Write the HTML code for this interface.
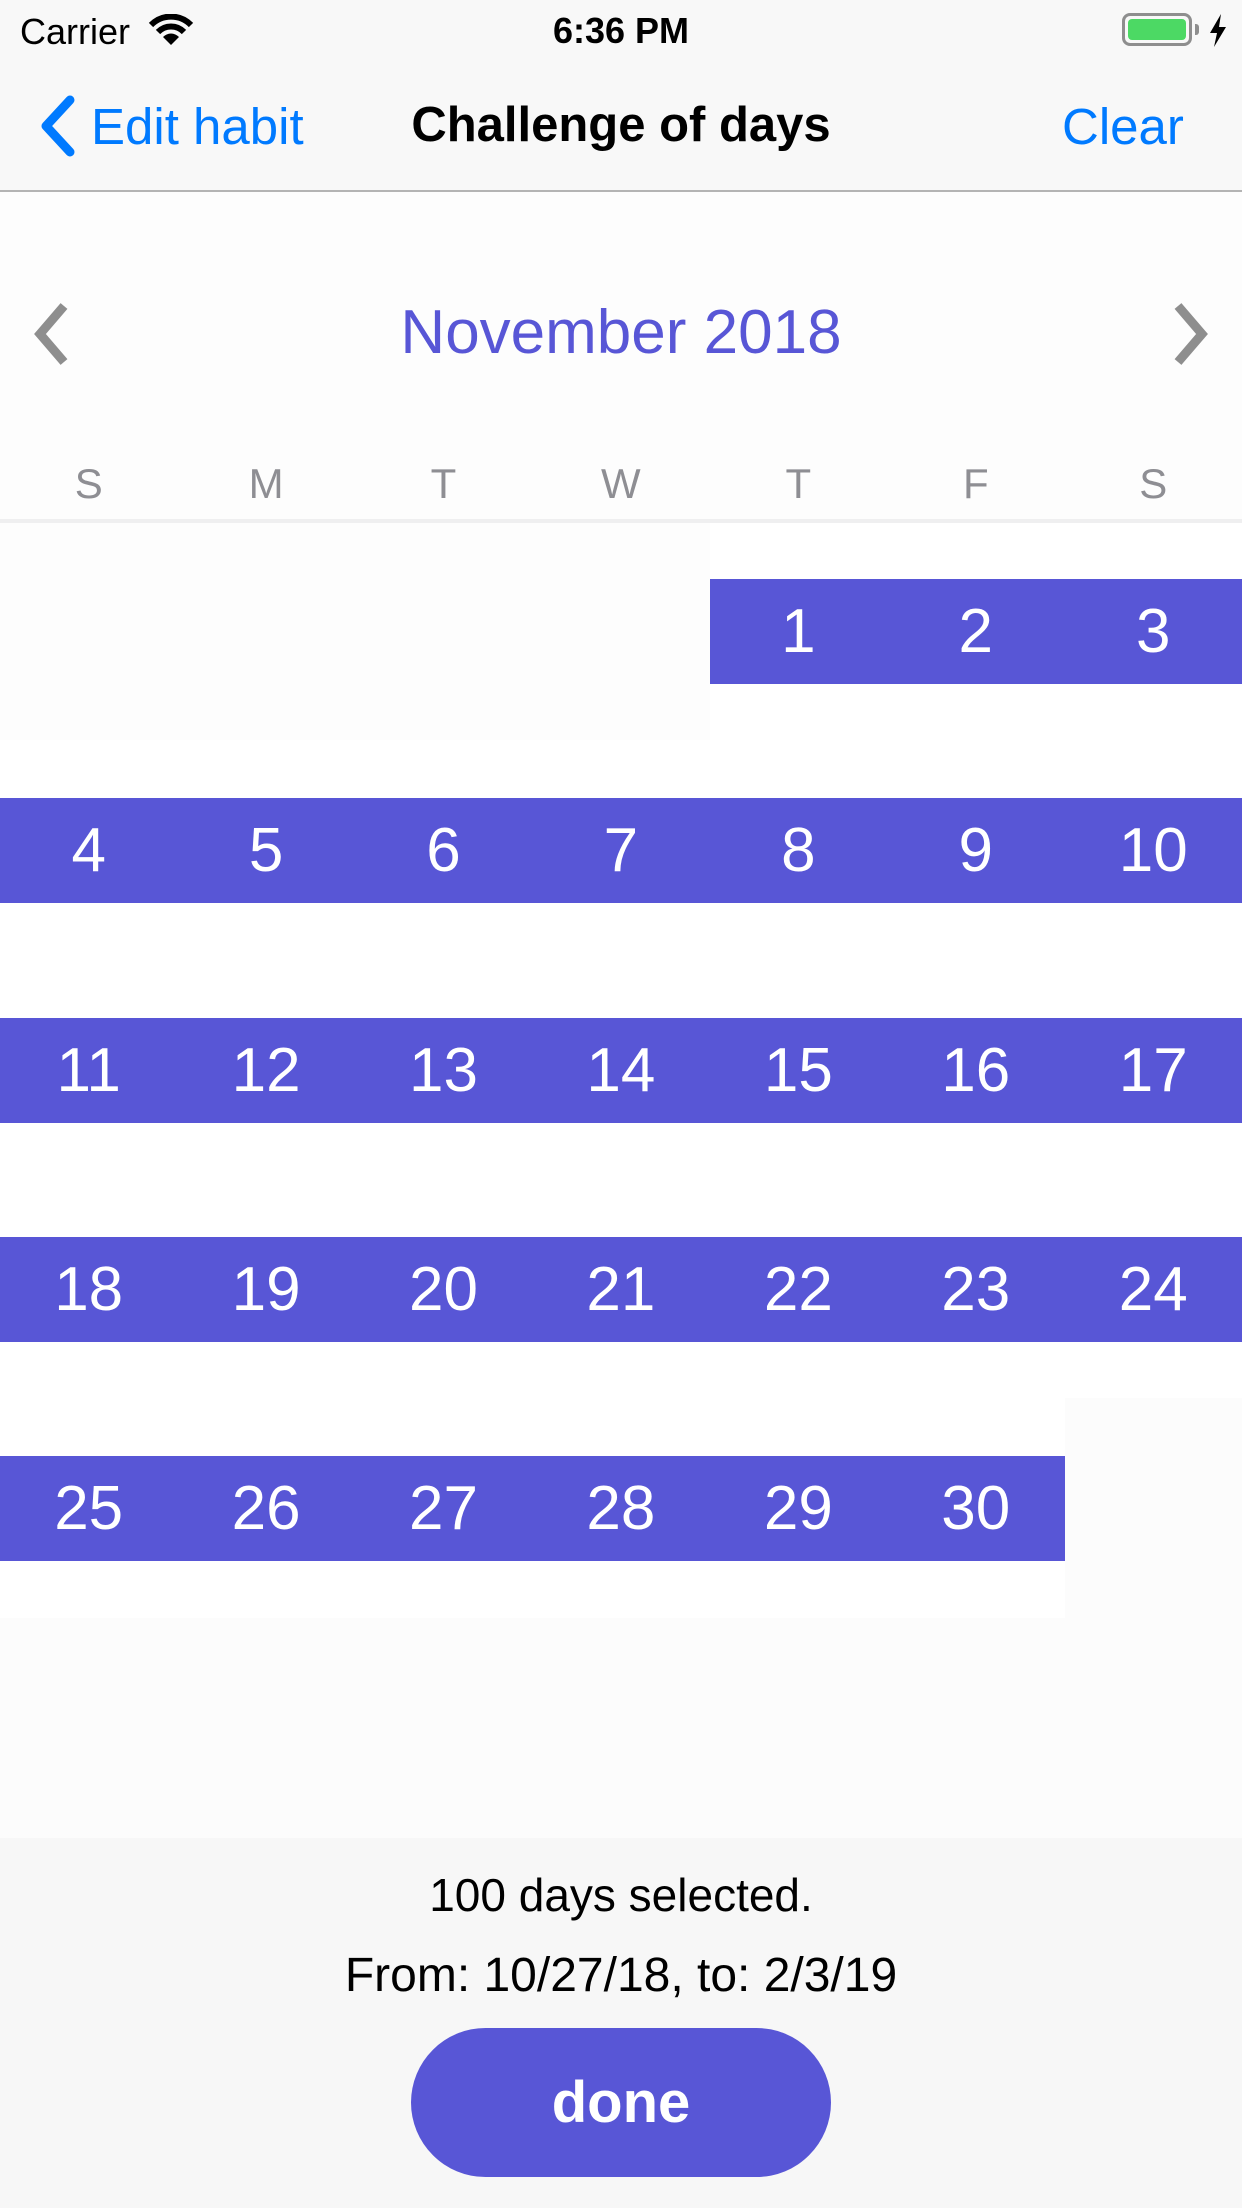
<!DOCTYPE html>
<html><head><meta charset="utf-8"><style>
*{margin:0;padding:0;box-sizing:border-box}
body{width:1242px;height:2208px;position:relative;overflow:hidden;font-family:"Liberation Sans",sans-serif;background:#fdfdfd}
.abs{position:absolute}
.nav{left:0;top:0;width:1242px;height:192px;background:#f8f8f8;border-bottom:2px solid #b4b4b4}
.t{position:absolute;white-space:nowrap;line-height:1}
.bar{position:absolute;height:105px;background:#5856d6}
.d{position:absolute;width:177.4px;text-align:center;color:#fff;font-size:62px;line-height:105px}
.wd{position:absolute;width:177.4px;text-align:center;color:#8e8e93;font-size:42px;top:460px}
</style></head><body>
<div class="abs nav"></div>
<div class="t" style="left:20px;top:14px;font-size:36px;color:#000">Carrier</div>
<svg class="abs" style="left:148px;top:14px" width="46" height="32" viewBox="0 0 46 32">
<path d="M3 11 A28 28 0 0 1 43 11" stroke="#000" stroke-width="6" fill="none"/>
<path d="M10 18 A18 18 0 0 1 36 18" stroke="#000" stroke-width="6" fill="none"/>
<path d="M23 31 L15 23 A11 11 0 0 1 31 23 Z" fill="#000"/></svg>
<div class="t" style="left:0;width:1242px;text-align:center;top:13px;font-size:36px;font-weight:bold;color:#000">6:36 PM</div>
<div class="abs" style="left:1122px;top:13px;width:70px;height:33px;border:3px solid #8e8e8e;border-radius:8px;padding:3px"><div style="width:100%;height:100%;background:#4cd964;border-radius:4px"></div></div>
<div class="abs" style="left:1195px;top:24px;width:4px;height:11px;background:#8e8e8e;border-radius:0 3px 3px 0"></div>
<svg class="abs" style="left:1208px;top:14px" width="20" height="33" viewBox="0 0 20 33"><path d="M13 0 L2 19 L9 19 L6 33 L18 13 L11 13 Z" fill="#000"/></svg>
<svg class="abs" style="left:36px;top:92px" width="44" height="68" viewBox="0 0 44 68"><path d="M34 8 L10 34 L34 60" stroke="#007aff" stroke-width="9" fill="none" stroke-linecap="round" stroke-linejoin="round"/></svg>
<div class="t" style="left:91px;top:101px;font-size:51px;color:#007aff">Edit habit</div>
<div class="t" style="left:0;width:1242px;text-align:center;top:101px;font-size:49px;font-weight:bold;color:#000">Challenge of days</div>
<div class="t" style="left:1062px;top:101px;font-size:51px;color:#007aff">Clear</div>
<svg class="abs" style="left:28px;top:302px" width="44" height="64" viewBox="0 0 44 64"><path d="M36 4 L12 32 L36 60" stroke="#8e8e8e" stroke-width="9" fill="none"/></svg>
<svg class="abs" style="left:1170px;top:302px" width="44" height="64" viewBox="0 0 44 64"><path d="M8 4 L32 32 L8 60" stroke="#8e8e8e" stroke-width="9" fill="none"/></svg>
<div class="t" style="left:0;width:1242px;text-align:center;top:302px;font-size:62px;color:#5856d6">November 2018</div>
<div class="wd" style="left:0">S</div><div class="wd" style="left:177.4px">M</div><div class="wd" style="left:354.8px">T</div><div class="wd" style="left:532.2px">W</div><div class="wd" style="left:709.7px">T</div><div class="wd" style="left:887.1px">F</div><div class="wd" style="left:1064.6px">S</div>
<div class="abs" style="left:0;top:519px;width:1242px;height:4px;background:#efeff0"></div>
<div class="abs" style="left:709.7px;top:523px;width:532.3px;height:1315px;background:#fff"></div>
<div class="abs" style="left:0;top:740px;width:1242px;height:878px;background:#fff"></div>
<div class="abs" style="left:1064.6px;top:1398px;width:178px;height:220px;background:#fcfcfc"></div>
<div class="abs" style="left:0;top:1618px;width:1242px;height:220px;background:#fcfcfc"></div>
<div class="bar" style="left:709.7px;top:579px;width:532.3px"></div>
<div class="bar" style="left:0;top:798px;width:1242px"></div>
<div class="bar" style="left:0;top:1018px;width:1242px"></div>
<div class="bar" style="left:0;top:1237px;width:1242px"></div>
<div class="bar" style="left:0;top:1456px;width:1064.6px"></div>
<div class="d" style="left:709.7px;top:579px">1</div><div class="d" style="left:887.1px;top:579px">2</div><div class="d" style="left:1064.6px;top:579px">3</div>
<div class="d" style="left:0;top:798px">4</div><div class="d" style="left:177.4px;top:798px">5</div><div class="d" style="left:354.8px;top:798px">6</div><div class="d" style="left:532.2px;top:798px">7</div><div class="d" style="left:709.7px;top:798px">8</div><div class="d" style="left:887.1px;top:798px">9</div><div class="d" style="left:1064.6px;top:798px">10</div>
<div class="d" style="left:0;top:1018px">11</div><div class="d" style="left:177.4px;top:1018px">12</div><div class="d" style="left:354.8px;top:1018px">13</div><div class="d" style="left:532.2px;top:1018px">14</div><div class="d" style="left:709.7px;top:1018px">15</div><div class="d" style="left:887.1px;top:1018px">16</div><div class="d" style="left:1064.6px;top:1018px">17</div>
<div class="d" style="left:0;top:1237px">18</div><div class="d" style="left:177.4px;top:1237px">19</div><div class="d" style="left:354.8px;top:1237px">20</div><div class="d" style="left:532.2px;top:1237px">21</div><div class="d" style="left:709.7px;top:1237px">22</div><div class="d" style="left:887.1px;top:1237px">23</div><div class="d" style="left:1064.6px;top:1237px">24</div>
<div class="d" style="left:0;top:1456px">25</div><div class="d" style="left:177.4px;top:1456px">26</div><div class="d" style="left:354.8px;top:1456px">27</div><div class="d" style="left:532.2px;top:1456px">28</div><div class="d" style="left:709.7px;top:1456px">29</div><div class="d" style="left:887.1px;top:1456px">30</div>
<div class="abs" style="left:0;top:1838px;width:1242px;height:370px;background:#f7f7f7"></div>
<div class="t" style="left:0;width:1242px;text-align:center;top:1872px;font-size:46px;color:#000">100 days selected.</div>
<div class="t" style="left:0;width:1242px;text-align:center;top:1952px;font-size:48px;color:#000">From: 10/27/18, to: 2/3/19</div>
<div class="abs" style="left:411px;top:2028px;width:420px;height:149px;border-radius:75px;background:#5856d6;color:#fff;font-weight:bold;font-size:58px;text-align:center;line-height:149px">done</div>
</body></html>
